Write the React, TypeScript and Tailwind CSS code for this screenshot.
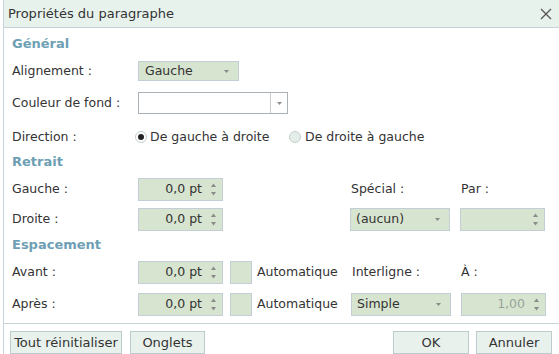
import React from "react";

const Arrow = () => (
  <svg width="7" height="5" viewBox="0 0 7 5" className="shrink-0">
    <path d="M1 1 L6 1 L3.5 4 Z" fill="#8a8a8a" />
  </svg>
);

const SpinArrows = () => (
  <div className="flex flex-col items-center gap-[3px] shrink-0">
    <svg width="7" height="5" viewBox="0 0 7 5">
      <path d="M3.5 0.5 L6 4 L1 4 Z" fill="#8a8a8a" />
    </svg>
    <svg width="7" height="5" viewBox="0 0 7 5">
      <path d="M1 1 L6 1 L3.5 4.5 Z" fill="#8a8a8a" />
    </svg>
  </div>
);

const Spin = ({ value, muted }: { value: string; muted?: boolean }) => (
  <div className="w-[85px] h-[23px] bg-[#d7e4cf] border border-[#c3ced6] flex items-center justify-end pr-[5px] gap-[8px]">
    <span className={muted ? "text-[#9aa39a]" : ""}>{value}</span>
    <SpinArrows />
  </div>
);

const Select = ({ value, w }: { value: string; w: string }) => (
  <div className={`${w} h-[23px] bg-[#d7e4cf] border border-[#c3ced6] flex items-center justify-between pl-[5px] pr-[8px]`}>
    <span>{value}</span>
    <Arrow />
  </div>
);

const Heading = ({ children, mt }: { children: React.ReactNode; mt: string }) => (
  <div className={`${mt} h-[18px] flex items-center font-bold text-[#6e9fb4] text-[13px]`}>{children}</div>
);

const Btn = ({ children, w }: { children: React.ReactNode; w: string }) => (
  <div className={`${w} h-[23px] bg-[#e8f1ec] border border-[#bccbce] flex items-center justify-center text-[13px]`}>
    {children}
  </div>
);

export default function App() {
  return (
    <div className="w-[559px] h-[354px] bg-white flex overflow-hidden font-['DejaVu_Sans',Verdana,sans-serif] text-[12.5px] text-[#333]">
      <div className="w-[3px] shrink-0 bg-white" />
      <div className="flex-1 flex flex-col border-l border-[#c9d2d8]">
        <div className="h-[28px] shrink-0 bg-[#e8f2ec] border-b border-[#c8d3d8] flex items-center justify-between pl-[4px] pr-[7px] text-[13px]">
          <span>Propriétés du paragraphe</span>
          <svg width="12" height="12" viewBox="0 0 12 12">
            <path d="M1 1 L11 11 M11 1 L1 11" stroke="#555" strokeWidth="1.3" />
          </svg>
        </div>
        <div className="pl-[8px] flex flex-col">
          <Heading mt="mt-[7px]">Général</Heading>
          <div className="mt-[8px] h-[20px] flex items-center">
            <span className="w-[126px]">Alignement :</span>
            <div className="w-[101px] h-[20px] bg-[#d7e4cf] border border-[#c3ced6] flex items-center justify-between pl-[6px] pr-[8px]">
              <span>Gauche</span>
              <Arrow />
            </div>
          </div>
          <div className="mt-[11px] h-[22px] flex items-center">
            <span className="w-[126px]">Couleur de fond :</span>
            <div className="w-[150px] h-[22px] bg-white border border-[#a9b1b6] flex">
              <div className="flex-1" />
              <div className="w-[17px] border-l border-[#c8cdd0] flex items-center justify-center">
                <Arrow />
              </div>
            </div>
          </div>
          <div className="mt-[14px] h-[18px] flex items-center">
            <span className="w-[123px]">Direction :</span>
            <div className="w-[12px] h-[12px] rounded-full bg-white border border-[#c5d0cb] flex items-center justify-center">
              <div className="w-[6px] h-[6px] rounded-full bg-[#222]" />
            </div>
            <span className="ml-[3px] w-[130px]">De gauche à droite</span>
            <div className="ml-[9px] w-[12px] h-[12px] rounded-full bg-[#e4eee9] border border-[#c5d0cb]" />
            <span className="ml-[4px]">De droite à gauche</span>
          </div>
          <Heading mt="mt-[7px]">Retrait</Heading>
          <div className="mt-[7px] h-[23px] flex items-center">
            <span className="w-[126px]">Gauche :</span>
            <Spin value="0,0 pt" />
            <span className="ml-[128px] w-[110px]">Spécial :</span>
            <span>Par :</span>
          </div>
          <div className="mt-[7px] h-[23px] flex items-center">
            <span className="w-[126px]">Droite :</span>
            <Spin value="0,0 pt" />
            <div className="ml-[127px]">
              <Select value="(aucun)" w="w-[100px]" />
            </div>
            <div className="ml-[10px]">
              <Spin value="" />
            </div>
          </div>
          <Heading mt="mt-[5px]">Espacement</Heading>
          <div className="mt-[7px] h-[23px] flex items-center">
            <span className="w-[126px]">Avant :</span>
            <Spin value="0,0 pt" />
            <div className="ml-[7px] w-[22px] h-[23px] bg-[#d7e4cf] border border-[#c3ced6]" />
            <span className="ml-[5px] w-[95px]">Automatique</span>
            <span className="w-[109px]">Interligne :</span>
            <span>À :</span>
          </div>
          <div className="mt-[9px] h-[23px] flex items-center">
            <span className="w-[126px]">Après :</span>
            <Spin value="0,0 pt" />
            <div className="ml-[7px] w-[22px] h-[23px] bg-[#d7e4cf] border border-[#c3ced6]" />
            <span className="ml-[5px] w-[94px]">Automatique</span>
            <Select value="Simple" w="w-[100px]" />
            <div className="ml-[10px]">
              <Spin value="1,00" muted />
            </div>
          </div>
        </div>
        <div className="mt-[7px] border-t border-[#c8d3d8]" />
        <div className="mt-[7px] flex items-center pl-[6px] pr-[7px]">
          <Btn w="w-[112px]">Tout réinitialiser</Btn>
          <div className="ml-[8px]">
            <Btn w="w-[75px]">Onglets</Btn>
          </div>
          <div className="flex-1" />
          <Btn w="w-[76px]">OK</Btn>
          <div className="ml-[7px]">
            <Btn w="w-[76px]">Annuler</Btn>
          </div>
        </div>
      </div>
    </div>
  );
}
